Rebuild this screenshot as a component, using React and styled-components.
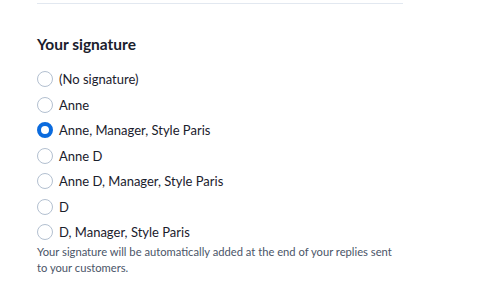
import React, { useState } from "react";
import styled, { createGlobalStyle } from "styled-components";

const GlobalStyle = createGlobalStyle`
  body {
    margin: 0;
    background: #fff;
    font-family: Lato, "Open Sans", sans-serif;
    color: #1a202c;
  }
`;

const Container = styled.div`
  width: 366px;
  margin-left: 37px;
  padding-top: 3px;
`;

const Divider = styled.hr`
  margin: 0;
  border: none;
  border-top: 1px solid #e2e8f0;
`;

const Title = styled.h2`
  margin: 30px 0 15px;
  font-size: 15.5px;
  font-weight: 700;
  line-height: 20px;
  color: #1a202c;
`;

const List = styled.div`
  display: flex;
  flex-direction: column;
  gap: 5.5px;
`;

const Option = styled.label`
  display: flex;
  align-items: center;
  gap: 6px;
  height: 20px;
  font-size: 13px;
  color: #1a202c;
  cursor: pointer;
`;

const Radio = styled.span`
  box-sizing: border-box;
  width: 16px;
  min-width: 16px;
  height: 16px;
  border-radius: 50%;
  border: ${({ checked }) =>
    checked ? "4.5px solid #0b6bde" : "1.5px solid #b3c0d0"};
  background: #fff;
`;

const Help = styled.p`
  margin: 2px 0 0;
  font-size: 11.2px;
  line-height: 16px;
  color: #4a5568;
`;

const signatures = [
  "(No signature)",
  "Anne",
  "Anne, Manager, Style Paris",
  "Anne D",
  "Anne D, Manager, Style Paris",
  "D",
  "D, Manager, Style Paris",
];

export default function App() {
  const [selected, setSelected] = useState(2);

  return (
    <>
      <GlobalStyle />
      <Container>
        <Divider />
        <Title>Your signature</Title>
        <List>
          {signatures.map((label, i) => (
            <Option key={label} onClick={() => setSelected(i)}>
              <Radio checked={selected === i} />
              {label}
            </Option>
          ))}
        </List>
        <Help>
          Your signature will be automatically added at the end of your replies
          sent to your customers.
        </Help>
      </Container>
    </>
  );
}
